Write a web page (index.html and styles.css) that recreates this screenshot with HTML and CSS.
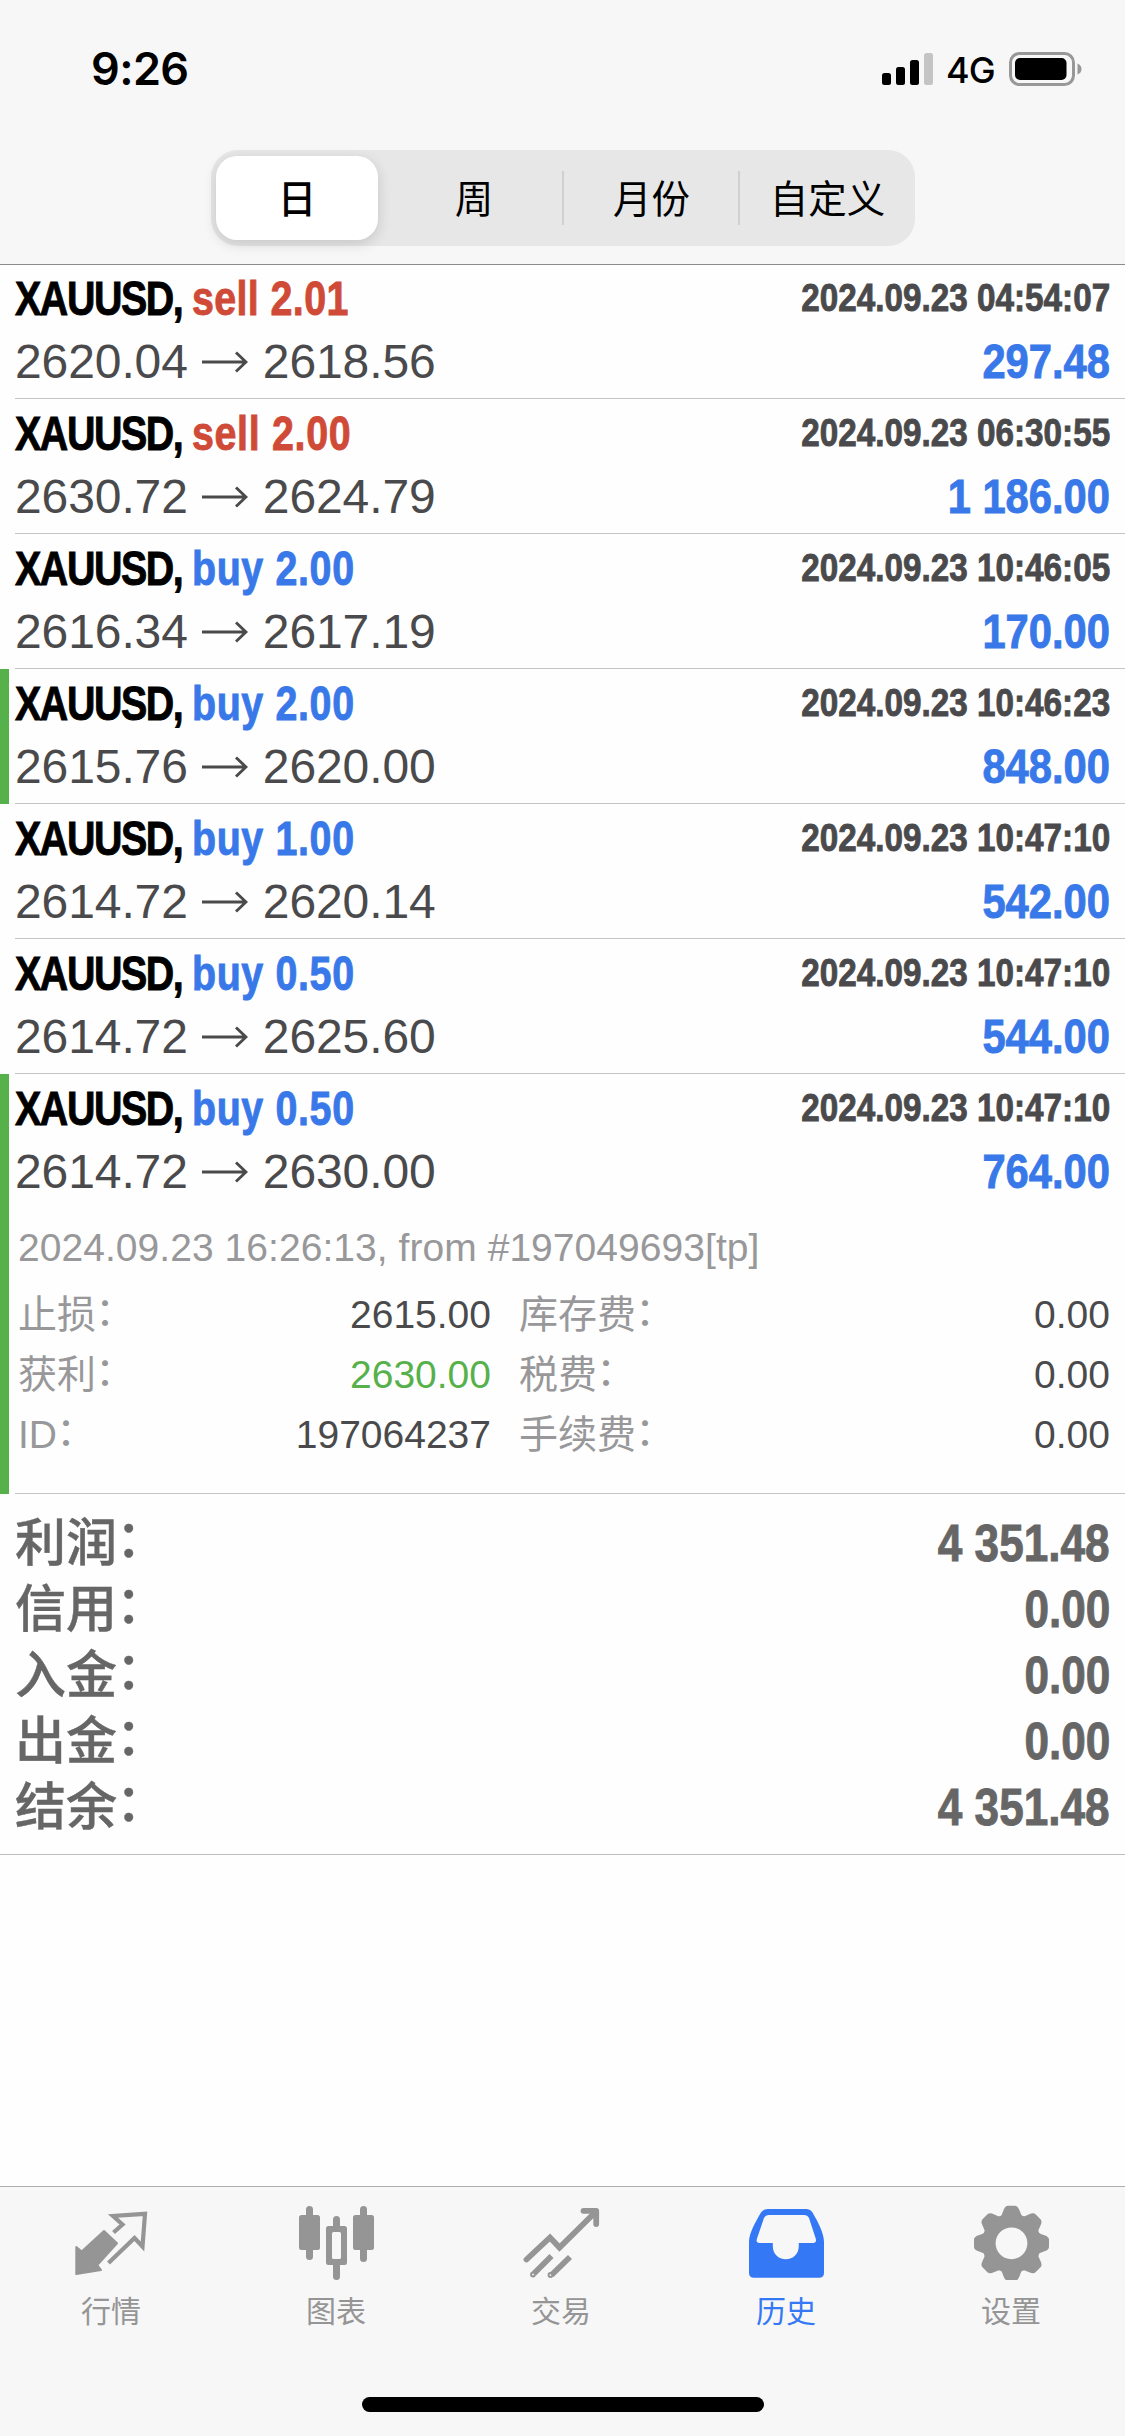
FILE: index.html
```html
<!DOCTYPE html>
<html lang="zh-CN">
<head>
<meta charset="utf-8">
<title>历史</title>
<link rel="stylesheet" href="styles.css">
</head>
<body>
<svg class="defs" aria-hidden="true">
  <symbol id="arrow" viewBox="0 0 46 22"><path d="M0 11H43.500M34 1.500 44 11 34 20.500" fill="none" stroke="currentColor" stroke-width="2.900"/></symbol>
</svg>
<header class="header">
  <div class="status">
    <span class="clock">9:26</span>
    <div class="status-right">
      <svg class="signal" width="51" height="34" viewBox="0 0 51 34"><rect x="0" y="21" width="9" height="12" rx="2.5"/><rect x="14" y="15" width="9" height="18" rx="2.5"/><rect x="28" y="8" width="9" height="25" rx="2.5"/><rect x="42" y="1" width="9" height="32" rx="2.5" fill="#c4c4c4"/></svg>
      <span class="net">4G</span>
      <svg class="battery" width="73" height="34" viewBox="0 0 73 34"><rect x="1.5" y="1.5" width="63" height="31" rx="9" fill="none" stroke="#989898" stroke-width="3"/><rect x="6" y="6" width="51.5" height="22" rx="5"/><path d="M68.500 11.500q4 1.500 4 5.500t-4 5.500z" fill="#989898"/></svg>
    </div>
  </div>
  <nav class="segments">
    <span class="segment selected">日</span>
    <span class="segment">周</span>
    <span class="segment divided">月份</span>
    <span class="segment divided">自定义</span>
  </nav>
</header>

<main class="history">
  <section class="deal"><div class="line"><div class="title"><span class="symbol">XAUUSD, </span><span class="sell">sell 2.01</span></div><div class="date">2024.09.23 04:54:07</div></div><div class="line"><div class="prices">2620.04<svg class="arrow"><use href="#arrow"/></svg>2618.56</div><div class="amount">297.48</div></div></section>
  <section class="deal"><div class="line"><div class="title"><span class="symbol">XAUUSD, </span><span class="sell wide">sell 2.00</span></div><div class="date">2024.09.23 06:30:55</div></div><div class="line"><div class="prices">2630.72<svg class="arrow"><use href="#arrow"/></svg>2624.79</div><div class="amount">1 186.00</div></div></section>
  <section class="deal"><div class="line"><div class="title"><span class="symbol">XAUUSD, </span><span class="buy">buy 2.00</span></div><div class="date">2024.09.23 10:46:05</div></div><div class="line"><div class="prices">2616.34<svg class="arrow"><use href="#arrow"/></svg>2617.19</div><div class="amount">170.00</div></div></section>
  <section class="deal tp"><div class="line"><div class="title"><span class="symbol">XAUUSD, </span><span class="buy">buy 2.00</span></div><div class="date">2024.09.23 10:46:23</div></div><div class="line"><div class="prices">2615.76<svg class="arrow"><use href="#arrow"/></svg>2620.00</div><div class="amount">848.00</div></div></section>
  <section class="deal"><div class="line"><div class="title"><span class="symbol">XAUUSD, </span><span class="buy">buy 1.00</span></div><div class="date">2024.09.23 10:47:10</div></div><div class="line"><div class="prices">2614.72<svg class="arrow"><use href="#arrow"/></svg>2620.14</div><div class="amount">542.00</div></div></section>
  <section class="deal"><div class="line"><div class="title"><span class="symbol">XAUUSD, </span><span class="buy">buy 0.50</span></div><div class="date">2024.09.23 10:47:10</div></div><div class="line"><div class="prices">2614.72<svg class="arrow"><use href="#arrow"/></svg>2625.60</div><div class="amount">544.00</div></div></section>
  <section class="deal tp open"><div class="line"><div class="title"><span class="symbol">XAUUSD, </span><span class="buy">buy 0.50</span></div><div class="date">2024.09.23 10:47:10</div></div><div class="line"><div class="prices">2614.72<svg class="arrow"><use href="#arrow"/></svg>2630.00</div><div class="amount">764.00</div></div>
    <div class="comment">2024.09.23 16:26:13, from #197049693[tp]</div>
    <div class="details">
      <span class="label">止损<span class="colon">：</span></span><span class="value">2615.00</span><span class="label second">库存费<span class="colon">：</span></span><span class="value">0.00</span>
      <span class="label">获利<span class="colon">：</span></span><span class="value hit">2630.00</span><span class="label second">税费<span class="colon">：</span></span><span class="value">0.00</span>
      <span class="label">ID<span class="colon">：</span></span><span class="value">197064237</span><span class="label second">手续费<span class="colon">：</span></span><span class="value">0.00</span>
    </div>
  </section>
  <section class="totals">
    <div class="total"><span class="name">利润<span class="colon">：</span></span><span class="sum">4 351.48</span></div>
    <div class="total"><span class="name">信用<span class="colon">：</span></span><span class="sum">0.00</span></div>
    <div class="total"><span class="name">入金<span class="colon">：</span></span><span class="sum">0.00</span></div>
    <div class="total"><span class="name">出金<span class="colon">：</span></span><span class="sum">0.00</span></div>
    <div class="total"><span class="name">结余<span class="colon">：</span></span><span class="sum">4 351.48</span></div>
  </section>
</main>

<footer class="footer">
  <nav class="tabs">
    <div class="tab"><svg class="icon" viewBox="0 0 81 80"><path d="M4.300 47 9.700 51.500 32 31 45 43.300 25.300 65 29 70 4.300 74z" fill="currentColor" stroke="currentColor" stroke-width="2" stroke-linejoin="round"/><path d="M41.500 32.500 50.500 24.500 41 16 73 13.800 70.500 46.500 62.500 38 36.500 63" fill="none" stroke="currentColor" stroke-width="4.200"/></svg><span class="tab-name">行情</span></div>
    <div class="tab"><svg class="icon" viewBox="0 0 81 80" fill="currentColor"><rect x="2" y="15" width="21" height="35" rx="2.500"/><rect x="9" y="6" width="7" height="54" rx="3.500"/><rect x="56" y="15" width="21" height="35" rx="2.500"/><rect x="63" y="6" width="7" height="56" rx="3.500"/><rect x="36" y="16" width="7" height="14" rx="3.500"/><rect x="36" y="60" width="7" height="20" rx="3.500"/><path fill-rule="evenodd" d="M31.500 26h16a2.500 2.500 0 0 1 2.500 2.500v34a2.500 2.500 0 0 1-2.500 2.500h-16a2.500 2.500 0 0 1-2.500-2.500v-34a2.500 2.500 0 0 1 2.500-2.500zM36.500 32a1.500 1.500 0 0 0-1.500 1.500v24a1.500 1.500 0 0 0 1.500 1.500h6a1.500 1.500 0 0 0 1.500-1.500v-24a1.500 1.500 0 0 0-1.500-1.500z"/></svg><span class="tab-name">图表</span></div>
    <div class="tab"><svg class="icon" viewBox="0 0 81 80" fill="none" stroke="currentColor" stroke-width="5.800"><path d="M4.500 59.500 28 37.500 37.500 47.500 74 11.500" stroke-linecap="round"/><path d="M61.500 10.800H74.200V24" stroke-linecap="round" stroke-linejoin="round"/><path d="M29.500 56 12 73.500M48 57 29.500 75"/><circle cx="11" cy="74.500" r="1.900" stroke-width="2"/><circle cx="28.500" cy="75" r="1.900" stroke-width="2"/></svg><span class="tab-name">交易</span></div>
    <div class="tab active"><svg class="icon" viewBox="0 0 81 80" fill="currentColor"><path fill-rule="evenodd" d="M21 9H59Q63.500 9 65.500 12.500C71 22 77 33 77 42V73Q77 77.700 72 77.700H7Q2 77.700 2 73V42C2 33 9 21 14 12.500Q16.500 9 21 9ZM22 15Q18.500 15 17 18L10 38.500Q8.500 43 12.500 43H25.800V46C25.800 54 31.500 59.200 38.800 59.200S51.800 54 51.800 46V43H66.500Q70 43 68.700 38.500L62 18Q60.500 15 57 15Z"/></svg><span class="tab-name">历史</span></div>
    <div class="tab"><svg class="icon" viewBox="0 0 81 80"><circle cx="39.500" cy="43.300" r="22.700" fill="none" stroke="currentColor" stroke-width="13.600"/><g transform="translate(39.500 43.300)" fill="currentColor"><path id="tooth" d="M-12-25Q-9.500-28-8-33Q-6.500-37.500-3.500-37.500H3.500Q6.500-37.500 8-33Q9.500-28 12-25Z"/><use href="#tooth" transform="rotate(45)"/><use href="#tooth" transform="rotate(90)"/><use href="#tooth" transform="rotate(135)"/><use href="#tooth" transform="rotate(180)"/><use href="#tooth" transform="rotate(225)"/><use href="#tooth" transform="rotate(270)"/><use href="#tooth" transform="rotate(315)"/></g></svg><span class="tab-name">设置</span></div>
  </nav>
  <div class="home"></div>
</footer>
</body>
</html>
```
FILE: styles.css
```css
* { box-sizing: border-box; }

body {
  margin: 0;
  height: 2436px;
  display: flex;
  flex-direction: column;
  background: #fefefe;
  color: #4a4a4c;
  font-family: "Liberation Sans", "Noto Sans CJK SC", sans-serif;
  white-space: nowrap;
}

.defs { display: none; }

/* Status bar and period switch */
.header {
  flex: none;
  height: 265px;
  background: #f7f7f7;
  border-bottom: 1px solid #8c8c8c;
}

.status {
  height: 150px;
  padding: 0 43px 0 91px;
  display: flex;
  justify-content: space-between;
  align-items: flex-start;
  color: #000;
  font-family: Inter, sans-serif;
}

.clock { margin-top: 41px; font-size: 45px; line-height: 56px; font-weight: 600; letter-spacing: -.6px; }
.status-right { display: flex; margin-top: 52px; height: 34px; }
.net { margin: 0 0 0 13px; width: 63px; font-size: 36px; line-height: 36px; font-weight: 500; letter-spacing: -1px; }
.signal, .battery { flex: none; display: block; }

.segments {
  width: 704px;
  height: 96px;
  margin-left: 211px;
  display: grid;
  grid-template-columns: repeat(4, 176px);
  align-items: center;
  border-radius: 27px;
  background: #e7e7e7;
  color: #000;
  font-family: "Noto Sans CJK SC", sans-serif;
  font-size: 38.5px;
}

.segment { height: 54px; padding-right: 2px; line-height: 50px; text-align: center; }
.divided { padding-right: 0; border-left: 2px solid #d0d0d0; margin-left: -1px; }
.selected {
  width: 162px;
  height: 84px;
  margin-left: 5px;
  padding-right: 0;
  line-height: 80px;
  border-radius: 21px;
  background: #fff;
  font-weight: 500;
  box-shadow: 0 4px 14px rgba(0, 0, 0, .14);
}

/* Deals */
.history { flex: 1; margin-top: -1px; }

.deal {
  height: 135px;
  padding: 10px 15px 0;
  background: linear-gradient(#c4c4c6, #c4c4c6) 15px 100% / 100% 1px no-repeat;
}
.deal.tp {
  background: linear-gradient(#57b14b, #57b14b) 0 100% / 9px 100% no-repeat,
    linear-gradient(#c4c4c6, #c4c4c6) 15px 100% / 100% 1px no-repeat;
}
.deal.open { height: 420px; }

.line {
  height: 48px;
  margin-bottom: 16px;
  display: flex;
  justify-content: space-between;
  font-size: 48px;
  line-height: 48px;
}

.title, .date, .amount, .sum { font-weight: 700; -webkit-text-stroke: .9px currentColor; }
.title { padding-top: 1px; transform: scaleX(.82); transform-origin: 0 0; white-space: pre; }
.symbol { color: #000; letter-spacing: -1.7px; }
.sell { color: #cf4b38; letter-spacing: .5px; }
.sell.wide { letter-spacing: .85px; }
.buy { color: #3878e8; letter-spacing: .8px; }
.date {
  padding-top: 4px;
  font-size: 39px;
  line-height: 39px;
  transform: scaleX(.853);
  transform-origin: 100% 0;
}
.amount { color: #3878e8; transform: scaleX(.868); transform-origin: 100% 0; }
.prices { display: flex; letter-spacing: -.1px; }
.arrow { width: 46px; height: 22px; margin: 13px 15px 0 14px; }

.comment { margin: 32px 0 0 3px; color: #98989a; font-size: 39px; line-height: 39px; letter-spacing: .05px; }
.details {
  margin: 18px 0 0 3px;
  display: grid;
  grid-template-columns: 173px 300px 200px 1fr;
  grid-auto-rows: 60px;
  font-size: 39px;
  line-height: 60px;
}
.label { color: #98989a; }
.value { text-align: right; }
.second { padding-left: 28px; }
.hit { color: #57b14b; }
.colon { margin-left: -.02em; line-height: 1; vertical-align: .07em; }

.totals {
  height: 361px;
  padding: 17px 15px 0;
  border-bottom: 1px solid #bdbdbf;
  color: #666;
}
.total {
  height: 66px;
  display: flex;
  justify-content: space-between;
  font-size: 51px;
  line-height: 66px;
}
.name { font-size: 51px; font-weight: 500; -webkit-text-stroke: .4px currentColor; }
.sum { transform: scaleX(.865); transform-origin: 100% 0; }

/* Tab bar */
.footer {
  flex: none;
  height: 250px;
  background: #f7f7f7;
  border-top: 1px solid #aeaeae;
}
.tabs {
  height: 210px;
  padding-top: 13px;
  display: grid;
  grid-template-columns: repeat(5, 225px);
}
.tab {
  display: flex;
  flex-direction: column;
  align-items: center;
  color: #959595;
  font-family: "Noto Sans CJK SC", sans-serif;
  font-size: 30px;
  line-height: 44px;
}
.icon { width: 81px; height: 80px; margin-bottom: 7px; }
.tab-name { padding-right: 3px; }
.active { color: #3478f6; }
.home { width: 402px; height: 15px; margin: 0 auto; border-radius: 8px; background: #000; }
```
